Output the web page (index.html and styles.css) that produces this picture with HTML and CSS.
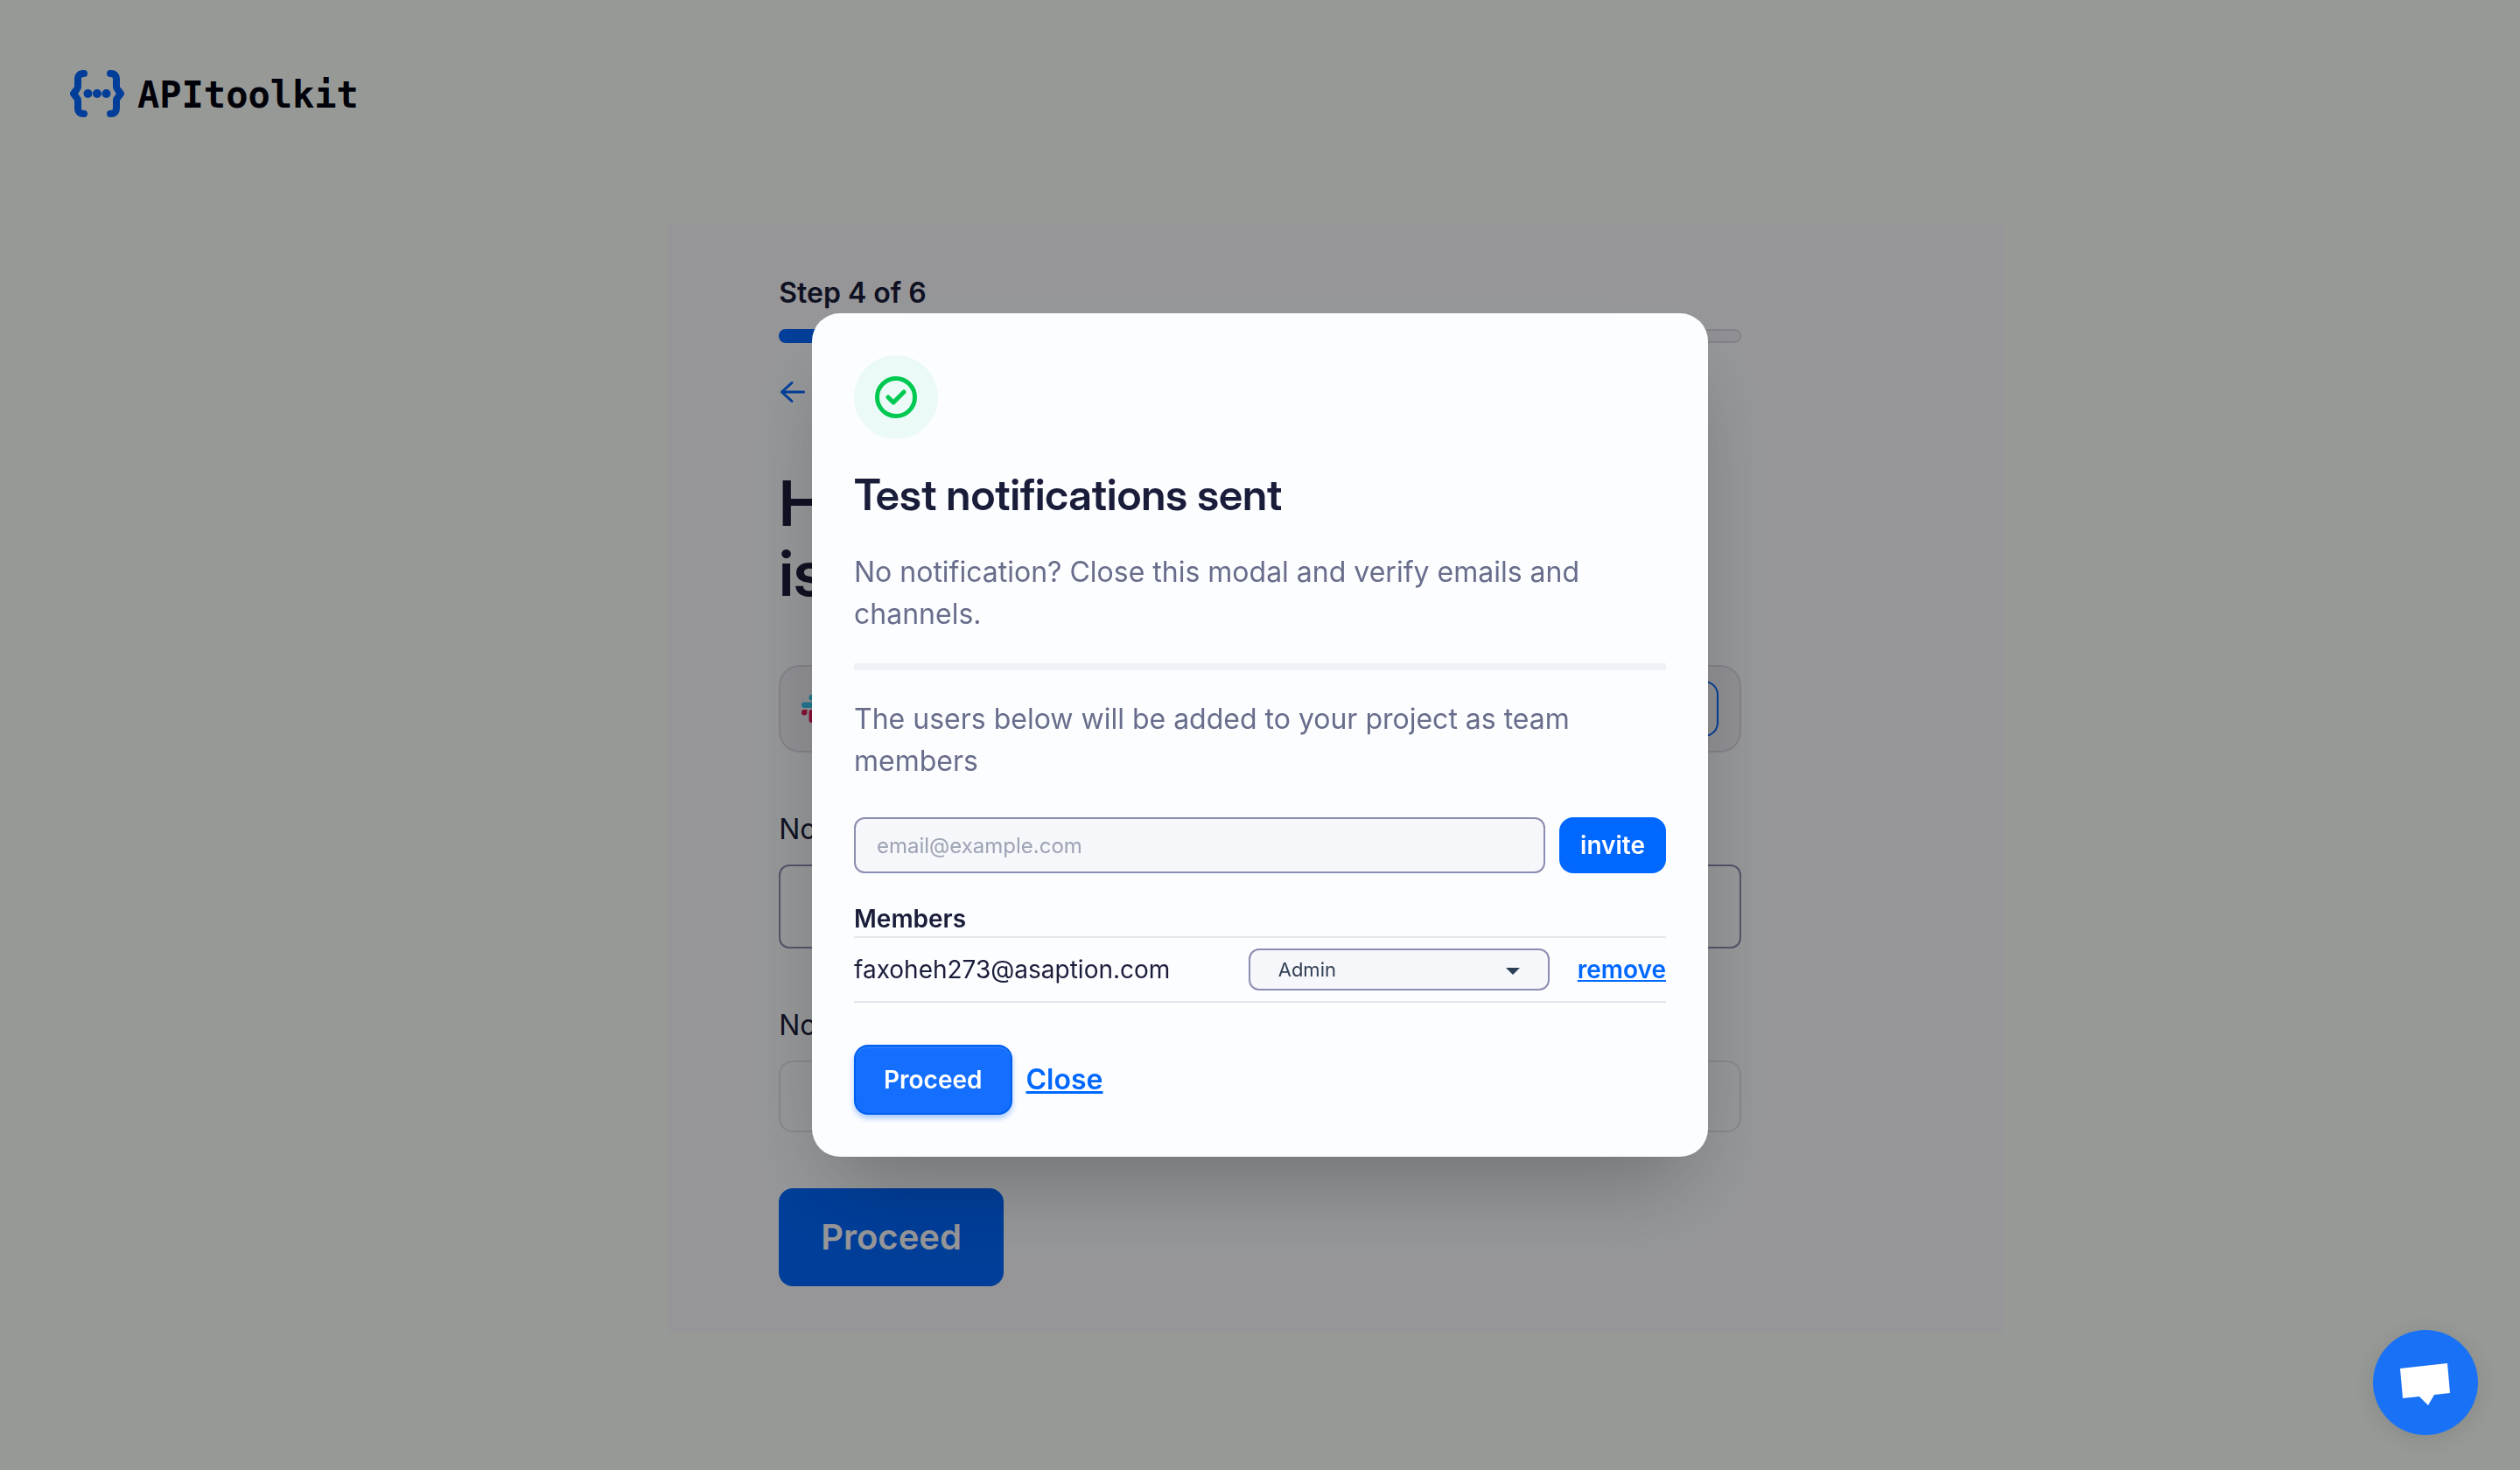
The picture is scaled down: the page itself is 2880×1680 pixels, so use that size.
FILE: index.html
```html
<!DOCTYPE html>
<html lang="en">
<head>
<meta charset="utf-8">
<meta name="viewport" content="width=device-width, initial-scale=1">
<title>APItoolkit - Onboarding</title>
<link rel="stylesheet" href="styles.css">
</head>
<body>
<header class="site-header">
  <a class="brand" href="#">
    <svg class="brand-mark" viewBox="0 0 62 54" aria-hidden="true">
      <g fill="none" stroke="currentColor" stroke-width="8" stroke-linecap="round" stroke-linejoin="round">
        <path d="M16 4h-1C11 4 9 6.500 9 10v9q0 2-1.500 3.500L4 27l3.500 4.500Q9 33 9 35v9c0 3.500 2 6 6 6h1"/>
        <path d="M46 4h1c4 0 6 2.500 6 6v9q0 2 1.500 3.500L58 27l-3.500 4.500Q53 33 53 35v9c0 3.500-2 6-6 6h-1"/>
      </g>
      <g fill="currentColor"><circle cx="20.500" cy="27" r="5"/><circle cx="31" cy="27" r="5"/><circle cx="41.500" cy="27" r="5"/></g>
    </svg>
    <span class="brand-name">APItoolkit</span>
  </a>
</header>

<main class="panel">
  <div class="onboarding">
    <p class="step">Step 4 of 6</p>
    <div class="progress"><div class="progress-fill"></div></div>
    <a class="back" href="#">
      <svg class="back-icon" viewBox="0 0 32 32" fill="none" stroke="currentColor" stroke-width="3" stroke-linecap="round" stroke-linejoin="round" aria-hidden="true"><path d="M28.500 16h-25M15 5.500L3.500 16L15 26.500"/></svg>
      Back
    </a>
    <h1 class="headline">How can we alert you if there<br>is an issue?</h1>
    <div class="slack-card">
      <span class="slack-name">
        <svg class="slack-icon" viewBox="0 0 32 32" aria-hidden="true">
          <path fill="#36c5f0" d="M11.700 0a3.200 3.200 0 0 0 0 6.400h3.200V3.200A3.200 3.200 0 0 0 11.700 0zM11.700 8.500H3.200a3.200 3.200 0 0 0 0 6.400h8.500a3.200 3.200 0 0 0 0-6.400z"/>
          <path fill="#2eb67d" d="M32 11.700a3.200 3.200 0 0 0-6.400 0v3.200h3.200a3.200 3.200 0 0 0 3.200-3.200zM23.500 11.700V3.200a3.200 3.200 0 0 0-6.400 0v8.500a3.200 3.200 0 0 0 6.400 0z"/>
          <path fill="#ecb22e" d="M20.300 32a3.200 3.200 0 0 0 0-6.400h-3.200v3.200a3.200 3.200 0 0 0 3.200 3.200zM20.300 23.500h8.500a3.200 3.200 0 0 0 0-6.400h-8.500a3.200 3.200 0 0 0 0 6.400z"/>
          <path fill="#e01e5a" d="M0 20.300a3.200 3.200 0 0 0 6.400 0v-3.200H3.200A3.200 3.200 0 0 0 0 20.300zM8.500 20.300v8.500a3.200 3.200 0 0 0 6.400 0v-8.500a3.200 3.200 0 0 0-6.400 0z"/>
        </svg>
        Slack
      </span>
      <button class="connect" type="button">Connect</button>
    </div>
    <label class="field-label" for="phone">Notify phone number</label>
    <input class="field" id="phone" type="tel">
    <label class="field-label" for="emails">Notify emails</label>
    <input class="field field-light" id="emails" type="text">
    <button class="proceed-large" type="button">Proceed</button>
  </div>
</main>

<div class="overlay">
  <section class="modal" role="dialog" aria-modal="true" aria-labelledby="modal-title">
    <div class="badge">
      <svg class="badge-icon" viewBox="0 0 48 48" fill="none" stroke="currentColor" stroke-width="5" stroke-linecap="round" stroke-linejoin="round" aria-hidden="true"><circle cx="24" cy="24" r="21.500"/><path d="M15 24l6 6L33 18"/></svg>
    </div>
    <h2 class="modal-title" id="modal-title">Test notifications sent</h2>
    <p class="modal-text">No notification? Close this modal and verify emails and channels.</p>
    <hr class="divider">
    <p class="modal-text">The users below will be added to your project as team members</p>
    <form class="invite-form">
      <input class="invite-input" type="email" placeholder="email@example.com" aria-label="Email">
      <button class="invite-button" type="button">invite</button>
    </form>
    <h3 class="members-title">Members</h3>
    <ul class="members">
      <li class="member">
        <span class="member-email">faxoheh273@asaption.com</span>
        <span class="role">
          <select class="role-select" aria-label="Role"><option>Admin</option><option>Editor</option><option>Viewer</option></select>
          <svg class="role-arrow" viewBox="0 0 16 8" aria-hidden="true"><path fill="currentColor" d="M0 0h16L8 8z"/></svg>
        </span>
        <button class="link remove" type="button">remove</button>
      </li>
    </ul>
    <div class="actions">
      <button class="proceed" type="button">Proceed</button>
      <button class="link close" type="button">Close</button>
    </div>
  </section>
</div>

<button class="chat" type="button" aria-label="Open chat">
  <svg class="chat-icon" viewBox="0 0 60 60" aria-hidden="true"><path fill="#fff" d="M1 14L55 8l3 34-18 2-7 12-10-10-19 2z"/></svg>
</button>
</body>
</html>
```
FILE: styles.css
```css
:root {
  --blue: #0068ff;
  --ink: #1a1d3a;
  --muted: #686d8b;
  --line: #e2e4ec;
  --outline: #8a8eb0;
  --soft-outline: #d9d9e6;
  --surface: #fbfcff;
}

* { box-sizing: border-box; }

body {
  margin: 0;
  min-height: 100vh;
  background: #fcfffc;
  color: var(--ink);
  font-family: Inter, "Liberation Sans", sans-serif;
  font-size: 32px;
  line-height: 48px;
}

h1, h2, h3, p, ul { margin: 0; padding: 0; }
button, input, select { font: inherit; color: inherit; }
button { border: 0; padding: 0; cursor: pointer; }
svg { display: block; flex: none; }

/* Page behind the modal */
.site-header { padding: 80px 80px 0; }
.brand {
  display: flex;
  align-items: center;
  gap: 15px;
  width: fit-content;
  height: 54px;
  color: var(--blue);
  text-decoration: none;
}
.brand-mark { width: 62px; height: 54px; }
.brand-name {
  padding-top: 4px;
  color: #02040f;
  font: 700 42px/54px "DejaVu Sans Mono", monospace;
}

.panel {
  width: 53%;
  margin: 121px 0 0 26.500%;
  padding: 56px 300px 54px 127px;
  background: #fafbff;
}
.onboarding { display: flex; flex-direction: column; }
.step { font-weight: 600; }
.progress {
  height: 16px;
  margin-top: 17px;
  border: 2px solid var(--soft-outline);
  border-radius: 8px;
  background: #f0f0f7;
}
.progress-fill {
  width: 66%;
  height: 16px;
  margin: -2px;
  border-radius: 8px;
  background: var(--blue);
}
.back {
  display: flex;
  align-items: center;
  gap: 12px;
  margin-top: 32px;
  color: var(--blue);
  text-decoration: none;
}
.back-icon { width: 32px; height: 32px; }
.headline {
  margin-top: 63px;
  font-family: "Inter Display", Inter, "Liberation Sans", sans-serif;
  font-size: 72px;
  line-height: 80px;
  font-weight: 600;
}
.slack-card {
  display: flex;
  align-items: center;
  justify-content: space-between;
  height: 100px;
  margin-top: 65px;
  padding: 0 24px;
  border: 2px solid var(--soft-outline);
  border-radius: 24px;
  background: #f0f0f7;
}
.slack-name { display: flex; align-items: center; gap: 16px; }
.slack-icon { width: 32px; height: 32px; }
.connect {
  padding: 6px 24px;
  border: 2px solid var(--blue);
  border-radius: 16px;
  background: none;
  color: var(--blue);
}
.field-label { margin-top: 64px; }
.field {
  width: 100%;
  height: 96px;
  margin-top: 16px;
  padding: 0 24px;
  border: 2px solid var(--outline);
  border-radius: 12px;
  background: transparent;
}
.field-light { height: 82px; border-color: #e2e3e6; border-radius: 16px; }
.proceed-large {
  align-self: flex-start;
  margin-top: 64px;
  padding: 32px 48px;
  border-radius: 16px;
  background: var(--blue);
  color: var(--surface);
  font-size: 40px;
  font-weight: 600;
}

/* Modal */
.overlay {
  position: fixed;
  inset: 0;
  display: flex;
  align-items: center;
  justify-content: center;
  background: rgba(0, 0, 0, .4);
}
.modal {
  width: 1024px;
  max-width: 92%;
  padding: 48px;
  border-radius: 32px;
  background: #fcfdff;
  box-shadow: 0 50px 100px -24px rgba(0, 0, 0, .25);
}
.badge {
  display: grid;
  place-items: center;
  width: 96px;
  height: 96px;
  border-radius: 50%;
  background: #ecfaf7;
  color: #00c951;
}
.badge-icon { width: 48px; height: 48px; }
.modal-title {
  margin: 32px 0;
  font-family: "Inter Display", Inter, "Liberation Sans", sans-serif;
  font-size: 49px;
  line-height: 64px;
  font-weight: 600;
}
.modal-text { color: var(--muted); }
.divider {
  height: 8px;
  margin: 32px 0;
  border: 0;
  background: #f1f2f7;
}
.invite-form { display: flex; gap: 16px; margin-top: 40px; }
.invite-input {
  flex: 1;
  min-width: 0;
  height: 64px;
  padding: 0 24px;
  border: 2px solid var(--outline);
  border-radius: 12px;
  background: #f6f7fb;
  font-size: 24px;
}
.invite-input::placeholder { color: #9ca3b3; opacity: 1; }
.invite-button {
  height: 64px;
  padding: 0 24px;
  border-radius: 16px;
  background: var(--blue);
  color: #fff;
  font-size: 28px;
  font-weight: 600;
}
.members-title {
  margin-top: 32px;
  border-bottom: 2px solid #e5e7eb;
  font-size: 28px;
  line-height: 40px;
  font-weight: 600;
}
.members { list-style: none; }
.member {
  display: flex;
  align-items: center;
  padding: 12px 0;
  border-bottom: 2px solid var(--line);
  font-size: 28px;
}
.member-email { flex: 1; }
.role { position: relative; width: 344px; margin-right: 32px; }
.role-select {
  display: block;
  width: 100%;
  height: 48px;
  padding: 0 32px;
  border: 2px solid var(--outline);
  border-radius: 12px;
  background: #f6f7fb;
  color: #334155;
  font-size: 22px;
  line-height: 32px;
  appearance: none;
}
.role-arrow {
  position: absolute;
  top: 22px;
  right: 34px;
  width: 16px;
  height: 8px;
  color: #2c3e56;
  pointer-events: none;
}
.link {
  background: none;
  color: var(--blue);
  font-weight: 600;
  text-decoration: underline;
}
.actions { display: flex; align-items: center; gap: 16px; margin-top: 48px; }
.proceed {
  height: 80px;
  padding: 0 32px;
  border: 2px solid #005fee;
  border-radius: 16px;
  background: #146fff;
  box-shadow: 0 4px 6px rgba(0, 104, 255, .35), inset 0 2px 0 rgba(255, 255, 255, .08);
  color: #fff;
  font-size: 28px;
  font-weight: 600;
}

.chat {
  position: fixed;
  right: 48px;
  bottom: 40px;
  display: grid;
  place-items: center;
  width: 120px;
  height: 120px;
  border-radius: 50%;
  background: #1972f5;
  box-shadow: 0 4px 24px rgba(0, 0, 0, .1);
}
.chat-icon { width: 60px; height: 60px; }
```
